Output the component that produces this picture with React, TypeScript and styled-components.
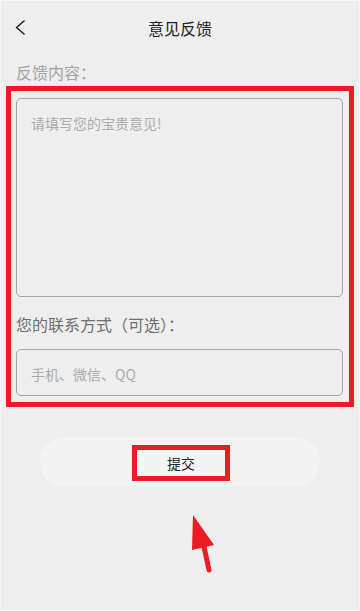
import React from "react"
import styled, { createGlobalStyle } from "styled-components"

const GlobalStyle = createGlobalStyle`
  html, body {
    margin: 0;
    padding: 0;
    background: #eeeeee;
  }
  * {
    box-sizing: border-box;
  }
`

const FONT = `"Noto Sans CJK SC", "Noto Sans", sans-serif`

export default function App() {
  return (
    <>
      <GlobalStyle />
      <S.Page>
        <S.Header>
          <S.Back>
            <svg width="12" height="16" viewBox="0 0 12 16">
              <polyline points="9,1 1.5,7.5 9,14" fill="none" stroke="#222" strokeWidth="1.6" strokeLinecap="round" strokeLinejoin="round" />
            </svg>
          </S.Back>
          <S.Title>意见反馈</S.Title>
          <span />
        </S.Header>

        <S.Label>反馈内容：</S.Label>

        <S.Highlight>
          <S.TextArea placeholder="请填写您的宝贵意见!" />
          <S.Label tone="dark">您的联系方式（可选）：</S.Label>
          <S.Input placeholder="手机、微信、QQ" />
        </S.Highlight>

        <S.SubmitPill>
          <S.SubmitMark>提交</S.SubmitMark>
        </S.SubmitPill>

        <S.Arrow>
          <svg width="32" height="62" viewBox="0 0 32 62">
            <line x1="16" y1="30" x2="22" y2="58" stroke="#ed1c24" strokeWidth="5" strokeLinecap="round" />
            <polygon points="6,3 5,38 27,33" fill="#ed1c24" />
          </svg>
        </S.Arrow>
      </S.Page>
    </>
  )
}

const S = {
  Page: styled.div`
    width: 360px;
    height: 611px;
    background: #eeeeee;
    border: 1px solid #f7f7f7;
    font-family: ${FONT};
    overflow: hidden;
  `,
  Header: styled.div`
    display: grid;
    grid-template-columns: 40px 1fr 40px;
    align-items: center;
    height: 53px;
  `,
  Back: styled.div`
    display: flex;
    align-items: center;
    padding-left: 14px;
    padding-top: 1px;
  `,
  Title: styled.div`
    text-align: center;
    font-size: 16px;
    color: #222;
    line-height: 20px;
  `,
  Label: styled.div<{ tone?: "dark" }>`
    font-size: 16px;
    line-height: 20px;
    color: ${({ tone }) => (tone === "dark" ? "#6e6e6e" : "#a3a3a3")};
    margin: ${({ tone }) => (tone === "dark" ? "17px 0 15px 0" : "8px 0 0 15px")};
  `,
  Highlight: styled.div`
    margin: 4px 5px 0 5px;
    border: 5px solid #ed1c24;
    padding: 7px 6px 6px 5px;
    display: flex;
    flex-direction: column;
  `,
  TextArea: styled.textarea`
    display: block;
    width: 100%;
    height: 199px;
    resize: none;
    background: transparent;
    border: 1px solid #a6a6a6;
    border-radius: 5px;
    padding: 14px 14px;
    font-family: ${FONT};
    font-size: 14px;
    line-height: 20px;
    color: #333;
    outline: none;
    &::placeholder {
      color: #ababab;
    }
  `,
  Input: styled.input`
    display: block;
    width: 100%;
    height: 47px;
    background: transparent;
    border: 1px solid #a6a6a6;
    border-radius: 5px;
    padding: 3px 14px 0;
    font-family: ${FONT};
    font-size: 14px;
    color: #333;
    outline: none;
    &::placeholder {
      color: #ababab;
    }
  `,
  SubmitPill: styled.div`
    margin: 30px auto 0;
    width: 280px;
    height: 50px;
    border-radius: 25px;
    background: #f3f3f3;
    display: flex;
    align-items: center;
    justify-content: center;
  `,
  SubmitMark: styled.div`
    width: 98px;
    height: 36px;
    margin-top: 2px;
    margin-left: 2px;
    border: 5px solid #ed1c24;
    background: #f4f4f4;
    display: flex;
    align-items: center;
    justify-content: center;
    font-size: 14px;
    color: #222;
  `,
  Arrow: styled.div`
    margin: 25px 0 0 186px;
    line-height: 0;
  `,
}
